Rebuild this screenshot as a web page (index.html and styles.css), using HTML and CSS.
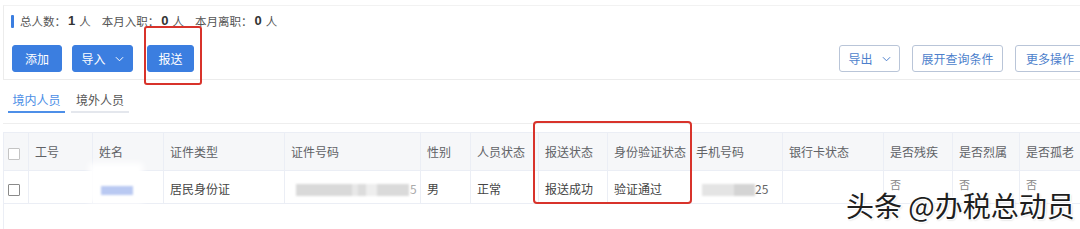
FILE: index.html
```html
<!DOCTYPE html>
<html lang="zh">
<head>
<meta charset="utf-8">
<link rel="stylesheet" href="styles.css">
</head>
<body>
<div class="page">
  <div class="card">
    <div class="stats">
      <span class="bar"></span>
      <span class="lbl">总人数：</span><b class="num">1</b><span class="unit">人</span>
      <span class="lbl">本月入职：</span><b class="num">0</b><span class="unit">人</span>
      <span class="lbl">本月离职：</span><b class="num">0</b><span class="unit">人</span>
    </div>
    <div class="toolbar">
      <div class="left">
        <button class="btn primary w-add">添加</button>
        <button class="btn primary w-imp">导入<svg class="chev" viewBox="0 0 10 6" width="9" height="6"><path d="M1 1l4 4 4-4" fill="none" stroke="currentColor" stroke-width="1.1"/></svg></button>
        <span class="mark-wrap"><button class="btn primary w-send">报送</button></span>
      </div>
      <div class="right">
        <button class="btn outline w-exp">导出<svg class="chev" viewBox="0 0 10 6" width="9" height="6"><path d="M1 1l4 4 4-4" fill="none" stroke="currentColor" stroke-width="1.1"/></svg></button>
        <button class="btn outline w-open">展开查询条件</button>
        <button class="btn outline w-more">更多操作</button>
      </div>
    </div>
  </div>

  <div class="tabs">
    <div class="tab active">境内人员</div>
    <div class="tab">境外人员</div>
  </div>
  <div class="sep"></div>

  <div class="table-wrap">
    <table class="grid">
      <colgroup>
        <col class="c-chk"><col class="c-no"><col class="c-name"><col class="c-type"><col class="c-id">
        <col class="c-sex"><col class="c-st"><col class="c-send"><col class="c-ver"><col class="c-tel">
        <col class="c-bank"><col class="c-dis"><col class="c-mar"><col class="c-old">
      </colgroup>
      <thead>
        <tr>
          <th class="chk"><span class="box light"></span></th>
          <th>工号</th>
          <th>姓名</th>
          <th>证件类型</th>
          <th>证件号码</th>
          <th>性别</th>
          <th>人员状态</th>
          <th>报送状态</th>
          <th>身份验证状态</th>
          <th class="tel-h">手机号码</th>
          <th>银行卡状态</th>
          <th>是否残疾</th>
          <th>是否烈属</th>
          <th>是否孤老</th>
        </tr>
      </thead>
      <tbody>
        <tr>
          <td class="chk"><span class="box"></span></td>
          <td></td>
          <td class="namecell"><span class="wipe"></span><span class="blur-name"></span></td>
          <td>居民身份证</td>
          <td class="idcell"><span class="blur-id"></span><span class="tail">5</span></td>
          <td>男</td>
          <td>正常</td>
          <td>报送成功</td>
          <td>验证通过</td>
          <td class="telcell"><span class="blur-tel"></span><span class="tail2">25</span></td>
          <td></td>
          <td class="no">否</td>
          <td class="no">否</td>
          <td class="no">否</td>
        </tr>
      </tbody>
    </table>
    <div class="mark-table"></div>
  </div>
</div>
<div class="watermark">头条 @办税总动员</div>
</body>
</html>
```

FILE: styles.css
```css
* { box-sizing: border-box; }
html, body { margin: 0; }
body {
  width: 1080px;
  height: 229px;
  overflow: hidden;
  background: #fff;
  font-family: "Noto Sans CJK SC", "Noto Sans", sans-serif;
  font-size: 12px;
  color: #444;
  position: relative;
}
.page { padding-left: 3px; width: 1100px; }

.card {
  margin-top: 5px;
  height: 75px;
  border-top: 1px solid #f2f2f2;
  border-left: 1px solid #ececec;
  border-bottom: 1px solid #ececec;
  padding-left: 7px;
}
.stats {
  margin-top: 8px;
  height: 14px;
  display: flex;
  align-items: center;
  color: #555;
  font-size: 11.5px;
  line-height: 14px;
}
.stats .bar {
  width: 3px; height: 13px;
  background: #3b7ee0;
  border-radius: 1px;
  margin-right: 6px;
}
.stats .num { font-size: 13px; color: #333; margin: 0 4px 0 2px; font-family: "Liberation Sans", sans-serif; }
.stats .unit { margin-right: 11px; }

.toolbar {
  margin-top: 17px;
  display: flex;
  justify-content: space-between;
  height: 27px;
}
.left, .right { display: flex; align-items: center; }
.left { margin-left: 1px; }
.right { margin-right: 15px; }
.btn {
  height: 27px;
  border-radius: 3px;
  font-family: inherit;
  font-size: 12px;
  padding: 0;
  display: inline-flex;
  align-items: center;
  justify-content: center;
  cursor: pointer;
}
.btn.primary {
  background: #3b7ee0;
  border: 1px solid #3b7ee0;
  color: #fff;
}
.btn.outline {
  background: #fff;
  border: 1px solid #b9c5d8;
  color: #4d7fcc;
}
.chev { margin-left: 9px; }
.w-add { width: 50px; }
.w-imp { width: 61px; margin-left: 10px; }
.w-send { width: 47px; }
.mark-wrap { position: relative; margin-left: 14px; display: inline-flex; }
.mark-wrap::after {
  content: "";
  position: absolute;
  left: -3px; top: -19px;
  width: 54px; height: 55px;
  border: 2px solid #d8332b;
  border-radius: 3px;
}
.w-exp { width: 61px; }
.w-open { width: 91px; margin-left: 12px; }
.w-more { width: 70px; margin-left: 12px; }

.tabs {
  display: flex;
  margin-top: 8px;
  margin-left: 5px;
}
.tab {
  width: 58px;
  height: 25px;
  line-height: 23px;
  text-align: center;
  color: #555;
  border-bottom: 2px solid #e4e7ed;
  margin-right: 6px;
}
.tab.active { color: #4b8ee6; border-bottom-color: #4d8fe8; width: 57px; }
.sep {
  margin-top: 10px;
  border-bottom: 1px solid #eeeeee;
}

.table-wrap {
  position: relative;
  margin-top: 8px;
  border-left: 1px solid #ebeef5;
  height: 100px;
}
.grid {
  border-collapse: collapse;
  table-layout: fixed;
  width: 1096px;
  margin-left: -1px;
}
.c-chk { width: 25px; }
.c-no { width: 64px; }
.c-name { width: 71px; }
.c-type { width: 121px; }
.c-id { width: 136px; }
.c-sex { width: 50px; }
.c-st { width: 68px; }
.c-send { width: 69px; }
.c-ver { width: 84px; }
.c-tel { width: 91px; }
.c-bank { width: 101px; }
.c-dis { width: 69px; }
.c-mar { width: 67px; }
.c-old { width: 80px; }

.grid th, .grid td {
  border: 1px solid #ebeef5;
  padding: 0 0 0 6px;
  text-align: left;
  white-space: nowrap;
  overflow: hidden;
}
.grid th {
  height: 38px;
  background: #f6f7f9;
  color: #606266;
  font-weight: normal;
}
.grid th.tel-h { padding-left: 4px; }
.grid td {
  height: 33px;
  color: #444;
  padding-top: 2px;
}
.grid .chk { padding-left: 4px; }
.box {
  display: inline-block;
  width: 12px; height: 12px;
  border: 1px solid #8a8a8a;
  border-radius: 1px;
  vertical-align: middle;
  background: #fff;
}
.box.light { border-color: #c4c4c4; }

.namecell { position: relative; overflow: visible !important; }
.wipe {
  position: absolute;
  left: -4px; top: -8px;
  width: 54px; height: 40px;
  background: #fff;
  filter: blur(3px);
}
.blur-name {
  position: relative;
  display: inline-block;
  width: 32px; height: 9px;
  margin-left: 2px;
  background: #b9c9f2;
  filter: blur(1px);
  vertical-align: middle;
}
.idcell { position: relative; }
.blur-id {
  display: inline-block;
  width: 113px; height: 12px;
  margin-left: 5px;
  background: linear-gradient(90deg, #d9d9d9 0 50%, #e8e8e8 50% 55%, #dcdcdc 55% 62%, #eeeeee 62% 72%, #dadada 72% 100%);
  filter: blur(1.2px);
  vertical-align: middle;
}
.tail { color: #aaa; margin-left: 1px; }
.blur-tel {
  display: inline-block;
  width: 53px; height: 12px;
  margin-left: 4px;
  background: linear-gradient(90deg, #e4e4e4 0 60%, #d4d4d4 60% 100%);
  filter: blur(1.2px);
  vertical-align: middle;
}
.tail2 { color: #666; }
.grid td.no {
  vertical-align: top;
  padding-top: 8px;
  color: #888;
  font-size: 11px;
  line-height: 11px;
}

.mark-table {
  position: absolute;
  left: 529px; top: -11px;
  width: 159px; height: 83px;
  border: 2px solid #d8332b;
  border-radius: 4px;
}

.watermark {
  position: absolute;
  left: 846px; top: 192px;
  font-size: 28px;
  line-height: 26px;
  color: #1e1e1e;
  text-shadow: 1px 1px 0 #fff, -1px -1px 0 #fff, 1px -1px 0 #fff, -1px 1px 0 #fff, 0 1px 0 #fff, 0 -1px 0 #fff, 1px 0 0 #fff, -1px 0 0 #fff, 1px 1px 2px rgba(0,0,0,.25);
  white-space: nowrap;
}
```
